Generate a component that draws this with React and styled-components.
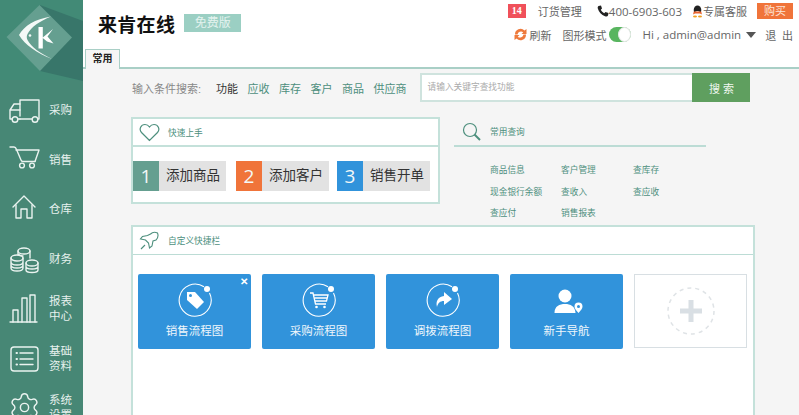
import styled, { createGlobalStyle } from "styled-components";
import { Settings } from "lucide-react";

const GlobalStyle = createGlobalStyle`
  html, body {
    margin: 0;
    padding: 0;
    height: 100%;
    overflow: hidden;
  }
  body {
    font-family: "Liberation Sans", "Noto Sans CJK SC", sans-serif;
  }
  * {
    box-sizing: border-box;
  }
`;

const Page = styled.div`
  display: flex;
  width: 799px;
  height: 415px;
  overflow: hidden;
  background: #f5f5f5;
`;

const Sidebar = styled.aside`
  width: 83px;
  flex: none;
  background: #478775;
  overflow: hidden;
`;

const LogoBox = styled.div`
  height: 86px;
  svg {
    display: block;
  }
`;

const NavItem = styled.div`
  height: 49.6px;
  display: flex;
  align-items: center;
  padding-left: 8px;
  flex: none;
`;

const NavIcon = styled.div`
  width: 34px;
  height: 34px;
  margin-right: 7px;
  flex: none;
  svg {
    display: block;
  }
`;

const NavLabel = styled.div`
  width: 24px;
  font-size: 11.5px;
  line-height: 15px;
  color: #e6f1ee;
`;

const Main = styled.main`
  flex: 1;
  min-width: 0;
  display: flex;
  flex-direction: column;
`;

const Header = styled.header`
  height: 49px;
  background: #fff;
  display: flex;
  justify-content: space-between;
  flex: none;
`;

const Brand = styled.div`
  display: flex;
  align-items: center;
  height: 46px;
  padding-left: 15px;
  gap: 9px;
`;

const BrandName = styled.h1`
  margin: 0;
  font-size: 19px;
  font-weight: 700;
  color: #111;
  letter-spacing: 0.3px;
`;

const Edition = styled.span`
  width: 57px;
  height: 18px;
  background: #9bcfc3;
  color: #e4f3ef;
  font-size: 12px;
  line-height: 18px;
  text-align: center;
`;

const HeaderRight = styled.div`
  display: flex;
  flex-direction: column;
  align-items: flex-end;
  padding: 3px 6px 0 0;
`;

const HeaderRow = styled.div`
  display: flex;
  align-items: center;
  height: ${(p) => p.$h}px;
  margin-bottom: ${(p) => p.$mb || 0}px;
  color: #666;
  white-space: nowrap;
`;

const CountBadge = styled.span`
  width: 18px;
  height: 14px;
  background: #f0505a;
  color: #fff;
  font-family: "Liberation Serif", serif;
  font-size: 10px;
  font-weight: 700;
  line-height: 14px;
  text-align: center;
  margin-right: 12px;
`;

const HeaderText = styled.span`
  margin-left: ${(p) => p.$ml || 0}px;
  font-family: "Open Sans", "Noto Sans CJK SC", sans-serif;
  font-size: ${(p) => p.$size || 11}px;
  word-spacing: ${(p) => p.$ws || 0}px;
`;

const BuyButton = styled.span`
  width: 36px;
  height: 16px;
  margin-left: 10px;
  background: #f0743a;
  color: #fde3d6;
  font-size: 11px;
  line-height: 16px;
  text-align: center;
`;

const Toggle = styled.span`
  width: 22px;
  height: 15px;
  margin-left: 3px;
  border-radius: 8px;
  background: #58b55f;
  display: flex;
  justify-content: flex-end;
  align-items: center;
`;

const ToggleKnob = styled.span`
  width: 13px;
  height: 15px;
  border-radius: 50%;
  background: #fff;
  border: 1px solid #e4e8e6;
`;

const TabStrip = styled.div`
  height: 20px;
  flex: none;
  background: #fff;
  border-bottom: 2px solid #a9cfc6;
  padding-left: 2px;
`;

const Tab = styled.div`
  width: 35px;
  height: 20px;
  background: #f5f5f5;
  border: 1px solid #a9cfc6;
  border-bottom: none;
  font-size: 10px;
  font-weight: 700;
  color: #222;
  line-height: 18px;
  text-align: center;
`;

const Content = styled.div`
  flex: 1;
  min-height: 0;
  padding: 4px 0 0 48px;
  display: flex;
  flex-direction: column;
`;

const SearchRow = styled.div`
  display: flex;
  align-items: center;
  height: 29px;
  width: 619px;
  flex: none;
`;

const SearchLabel = styled.span`
  width: 85px;
  padding-left: 1px;
  font-size: 11px;
  color: #888;
  white-space: nowrap;
`;

const FilterLink = styled.span`
  width: ${(p) => p.$w || 31.5}px;
  font-size: 11px;
  color: ${(p) => (p.$active ? "#333" : "#4d8f7d")};
`;

const SearchInput = styled.div`
  margin-left: 13px;
  flex: 1;
  height: 29px;
  background: #fff;
  border: 2px solid #cfe3de;
  border-right: none;
  padding-left: 6px;
  font-size: 8.7px;
  line-height: 25px;
  color: #aaa;
`;

const SearchButton = styled.button`
  width: 58px;
  height: 29px;
  border: none;
  padding: 0 0 0 4px;
  background: #5f9f5f;
  color: #f0f7f0;
  font-family: inherit;
  font-size: 11px;
  letter-spacing: 3px;
`;

const TopPanels = styled.div`
  display: flex;
  margin-top: 15px;
  height: 108px;
  flex: none;
`;

const QuickPanel = styled.section`
  width: 309px;
  height: 87px;
  background: #fff;
  border: 2px solid #c4e1da;
`;

const PanelHead = styled.div`
  display: flex;
  align-items: center;
  height: ${(p) => p.$h || 28}px;
  padding-left: ${(p) => p.$pl || 6}px;
  gap: 8px;
  border-bottom: ${(p) => p.$line || 2}px solid ${(p) => p.$color || "#c4e1da"};
  font-size: 8.7px;
  color: #4d8f7d;
  svg {
    flex: none;
  }
`;

const Steps = styled.div`
  display: flex;
  padding-top: 14px;
`;

const Step = styled.div`
  display: flex;
  width: 93px;
  height: 30px;
  margin-right: ${(p) => p.$mr || 0}px;
  background: #e2e2e2;
`;

const StepNum = styled.span`
  width: 26px;
  flex: none;
  background: ${(p) => p.$color};
  color: #f4f8f7;
  font-family: "Open Sans", sans-serif;
  font-size: 19px;
  line-height: 30px;
  text-align: center;
`;

const StepText = styled.span`
  flex: 1;
  padding-left: 7px;
  font-size: 13.5px;
  line-height: 30px;
  color: #333;
  white-space: nowrap;
`;

const QueryPanel = styled.section`
  width: 252px;
  margin-left: 14px;
`;

const QueryGrid = styled.div`
  display: grid;
  grid-template-columns: 71px 72px 60px;
  grid-auto-rows: 21.5px;
  padding: 13px 0 0 36px;
  font-size: 8.7px;
  line-height: 21.5px;
  color: #4d8f7d;
  white-space: nowrap;
`;

const CustomPanel = styled.section`
  width: 624px;
  flex: 1;
  background: #fff;
  border: 2px solid #c4e1da;
  border-bottom: none;
`;

const Tiles = styled.div`
  display: flex;
  gap: 11px;
  padding: 19px 0 0 5px;
`;

const Tile = styled.div`
  position: relative;
  width: 113px;
  height: 75px;
  background: #3193db;
  border-radius: 2px;
  color: #f0f7fc;
  font-size: 11.5px;
  display: flex;
  flex-direction: column;
  align-items: center;
  padding-top: 8px;
  svg {
    display: block;
  }
`;

const TileLabel = styled.span`
  margin-top: 5px;
  line-height: 16px;
`;

const CloseMark = styled.span`
  position: absolute;
  top: 2px;
  right: 3px;
  font-size: 10px;
  line-height: 12px;
  font-weight: 700;
  color: #fff;
`;

const AddTile = styled.div`
  width: 113px;
  height: 74px;
  border: 1.5px solid #d8dfe3;
  display: flex;
  align-items: center;
  justify-content: center;
  background: #fff;
`;

const line = {
  fill: "none",
  stroke: "#eaf3f0",
  strokeWidth: 1.4,
  strokeLinecap: "round",
  strokeLinejoin: "round",
};

const navIcons = {
  truck: (
    <svg width="34" height="34" viewBox="0 0 34 34" {...line}>
      <path d="M12 22V6h19v19h-1M24 25H12" />
      <path d="M12 10H6l-4 6v9h2M2 16h10M10 25h2" />
      <circle cx="7" cy="25.500" r="2.800" />
      <circle cx="27" cy="25.500" r="2.800" />
    </svg>
  ),
  cart: (
    <svg width="34" height="34" viewBox="0 0 34 34" {...line}>
      <path d="M2 4h4c1.500 0 2 1 2.500 2.500L13 17c.3 1 1 1.500 2 1.500h12" />
      <path d="M8 7h23l-4 11.500" />
      <circle cx="14" cy="22.500" r="2.400" />
      <circle cx="24" cy="22.500" r="2.400" />
    </svg>
  ),
  house: (
    <svg width="34" height="34" viewBox="0 0 34 34" {...line}>
      <path d="M5 14 16 3l11 11" />
      <path d="M8 12v13h5V16h6v9h5V12" />
    </svg>
  ),
  coins: (
    <svg width="34" height="34" viewBox="0 0 34 34" {...line}>
      <ellipse cx="16" cy="8" rx="6" ry="3" />
      <path d="M10 8v4M22 8v7M10 11c1 1.500 3 2 5 2" />
      <ellipse cx="9" cy="15" rx="6" ry="3" />
      <path d="M3 15v10c0 2 3 3 6 3s6-1 6-3V15M3 19c0 2 3 3 6 3s6-1 6-3M3 22c0 2 3 3 6 3s6-1 6-3" />
      <ellipse cx="24" cy="20" rx="6" ry="3" />
      <path d="M18 20v7c0 1.500 3 2.500 6 2.500s6-1 6-2.500v-7M18 23.500c0 1.500 3 2.500 6 2.500s6-1 6-2.500" />
    </svg>
  ),
  bars: (
    <svg width="34" height="34" viewBox="0 0 34 34" {...line}>
      <path d="M2 30h27" />
      <path d="M5 30V18h5v12M14 30V6h5v24M22 30V3h5v27" />
    </svg>
  ),
  list: (
    <svg width="34" height="34" viewBox="0 0 34 34" {...line}>
      <rect x="3" y="5" width="27" height="24" rx="3" />
      <path d="M12 11h13M12 17h13M12 22.500h13" />
      <path d="M8.500 11h.5M8.500 17h.5M8.500 22.500h.5" strokeWidth="2" />
    </svg>
  ),
  gear: <Settings size={33} color="#eaf3f0" strokeWidth={1.05} />,
};

const navItems = [
  { icon: "truck", label: "采购" },
  { icon: "cart", label: "销售" },
  { icon: "house", label: "仓库" },
  { icon: "coins", label: "财务" },
  { icon: "bars", label: "报表中心" },
  { icon: "list", label: "基础资料" },
  { icon: "gear", label: "系统设置" },
];

const queryLinks = [
  "商品信息",
  "客户管理",
  "查库存",
  "现金银行余额",
  "查收入",
  "查应收",
  "查应付",
  "销售报表",
];

function Logo() {
  return (
    <svg width="83" height="86" viewBox="0 0 83 86">
      <rect width="83" height="86" fill="#428a76" />
      <path d="M0 80h83v6H0z" fill="#478775" />
      <path d="M40 5 83 21v60L40 71z" fill="#38766a" />
      <path d="M39.500 5 72 37.500 40 71 6.500 37z" fill="#659f90" />
      <path
        d="M51 16.500C35 19 24 26 19 35c6 10 18 18 33 24C40 53 31 47 27.500 40c-1-2-1-4 0-6C31 27 40 21 51 16.500z"
        fill="#f4f9f7"
      />
      <circle cx="30" cy="35.500" r="1.300" fill="#f4f9f7" />
      <path
        d="M38.500 27h4.300v10.500L53 29l-5.500 7.500 6 7-6.500-2-4.200-3.500V48.500h-4.300z"
        fill="#fff"
      />
    </svg>
  );
}

function TileBadge({ children }) {
  return (
    <svg width="36" height="36" viewBox="0 0 36 36">
      <path
        d="M27 4.800A16 16 0 1 0 32.500 11"
        fill="none"
        stroke="#fff"
        strokeWidth="1.100"
      />
      <circle cx="30" cy="7" r="3" fill="#fff" />
      {children}
    </svg>
  );
}

export default function App() {
  return (
    <Page>
      <GlobalStyle />
      <Sidebar>
        <LogoBox>
          <Logo />
        </LogoBox>
        {navItems.map((item) => (
          <NavItem key={item.label}>
            <NavIcon>{navIcons[item.icon]}</NavIcon>
            <NavLabel>{item.label}</NavLabel>
          </NavItem>
        ))}
      </Sidebar>

      <Main>
        <Header>
          <Brand>
            <BrandName>来肯在线</BrandName>
            <Edition>免费版</Edition>
          </Brand>
          <HeaderRight>
            <HeaderRow $h={16} $mb={7}>
              <CountBadge>14</CountBadge>
              <HeaderText>订货管理</HeaderText>
              <svg width="12" height="12" viewBox="0 0 12 12" style={{ marginLeft: 15 }}>
                <path
                  d="M1.500 1 4 .5 5 3.500 3.800 4.800c.6 1.500 2 2.800 3.400 3.400L8.500 7 11.500 8l-.5 2.500C10.500 11.500 9.500 11.800 8 11.300 4.500 10 1.800 7 .8 3.500.5 2.500.8 1.500 1.500 1z"
                  fill="#222"
                />
              </svg>
              <HeaderText $size={11.5}>400-6903-603</HeaderText>
              <svg width="11" height="13" viewBox="0 0 11 13" style={{ marginLeft: 10 }}>
                <ellipse cx="5.500" cy="5" rx="3.800" ry="4.500" fill="#222" />
                <ellipse cx="5.500" cy="8.300" rx="2.600" ry="2.400" fill="#fff" />
                <path d="M1.800 6.500h7.400l.8 3-2-1H3l-2 1z" fill="#e9622b" />
                <ellipse cx="3" cy="11.500" rx="2" ry="1" fill="#f0a020" />
                <ellipse cx="8" cy="11.500" rx="2" ry="1" fill="#f0a020" />
              </svg>
              <HeaderText>专属客服</HeaderText>
              <BuyButton>购买</BuyButton>
            </HeaderRow>
            <HeaderRow $h={17}>
              <svg width="15" height="15" viewBox="0 0 15 15">
                <path
                  d="M2 7.500A5.500 5.500 0 0 1 11.500 3.500L13.500 2v5H8.500l1.700-1.700A3.500 3.500 0 0 0 4.500 7.500z"
                  fill="#ee7a3c"
                />
                <path
                  d="M13 7.500A5.500 5.500 0 0 1 3.500 11.500L1.500 13V8h5L4.800 9.700a3.500 3.500 0 0 0 5.700-2.200z"
                  fill="#ee7a3c"
                />
              </svg>
              <HeaderText $ml={1}>刷新</HeaderText>
              <HeaderText $ml={11}>图形模式</HeaderText>
              <Toggle>
                <ToggleKnob />
              </Toggle>
              <HeaderText $ml={11} $size={11.5}>
                Hi , admin@admin
              </HeaderText>
              <svg width="10" height="6" viewBox="0 0 10 6" style={{ marginLeft: 5 }}>
                <path d="M0 0h10L5 6z" fill="#555" />
              </svg>
              <HeaderText $ml={9} $ws={3}>
                退 出
              </HeaderText>
            </HeaderRow>
          </HeaderRight>
        </Header>

        <TabStrip>
          <Tab>常用</Tab>
        </TabStrip>

        <Content>
          <SearchRow>
            <SearchLabel>输入条件搜索:</SearchLabel>
            <FilterLink $active>功能</FilterLink>
            <FilterLink>应收</FilterLink>
            <FilterLink>库存</FilterLink>
            <FilterLink>客户</FilterLink>
            <FilterLink>商品</FilterLink>
            <FilterLink $w={33}>供应商</FilterLink>
            <SearchInput>请输入关键字查找功能</SearchInput>
            <SearchButton>搜索</SearchButton>
          </SearchRow>

          <TopPanels>
            <QuickPanel>
              <PanelHead>
                <svg width="21" height="19" viewBox="0 0 21 19">
                  <path
                    d="M10.500 17.500 2.500 9.500C-.5 6 2 1.500 6 1.500c2 0 3.500 1 4.500 2.500 1-1.500 2.500-2.500 4.500-2.500 4 0 6.500 4.500 3.500 8z"
                    fill="none"
                    stroke="#4d8f7d"
                    strokeWidth="1.200"
                  />
                </svg>
                <span>快速上手</span>
              </PanelHead>
              <Steps>
                <Step $mr={10}>
                  <StepNum $color="#659f90">1</StepNum>
                  <StepText>添加商品</StepText>
                </Step>
                <Step $mr={8}>
                  <StepNum $color="#f0743a">2</StepNum>
                  <StepText>添加客户</StepText>
                </Step>
                <Step>
                  <StepNum $color="#3193db">3</StepNum>
                  <StepText>销售开单</StepText>
                </Step>
              </Steps>
            </QuickPanel>

            <QueryPanel>
              <PanelHead $h={30} $pl={8} $color="#bcdcd5">
                <svg width="19" height="19" viewBox="0 0 19 19" style={{ marginRight: 1 }}>
                  <circle cx="8" cy="8" r="6.500" fill="none" stroke="#4d8f7d" strokeWidth="1.200" />
                  <path d="M12.500 12.500 18 18" stroke="#4d8f7d" strokeWidth="2" />
                </svg>
                <span>常用查询</span>
              </PanelHead>
              <QueryGrid>
                {queryLinks.map((text) => (
                  <span key={text}>{text}</span>
                ))}
              </QueryGrid>
            </QueryPanel>
          </TopPanels>

          <CustomPanel>
            <PanelHead $h={28} $line={1} $color="#bcdcd5">
              <svg width="21" height="20" viewBox="0 0 21 20">
                <path
                  d="M11.500 3c2-2 5-2 7-1 .8 2 .5 5-1.500 7l-3 1-1 5-2.500 2-1-5-3-3-5-1 2-2.500 5-1z M6 14l-4 4"
                  fill="none"
                  stroke="#4d8f7d"
                  strokeWidth="1.100"
                />
              </svg>
              <span>自定义快捷栏</span>
            </PanelHead>
            <Tiles>
              <Tile>
                <CloseMark>✕</CloseMark>
                <TileBadge>
                  <path d="M10 10h8l9 10-7 7-10-9z" fill="#fff" />
                  <circle cx="13.500" cy="13.500" r="1.500" fill="#3193db" />
                </TileBadge>
                <TileLabel>销售流程图</TileLabel>
              </Tile>
              <Tile>
                <TileBadge>
                  <path
                    d="M9 11h3l2.500 11H25M13 13h14l-1.500 6H14.200M13.800 16h12.500"
                    fill="none"
                    stroke="#fff"
                    strokeWidth="1.300"
                  />
                  <circle cx="15.500" cy="25" r="1.300" fill="#fff" />
                  <circle cx="23.500" cy="25" r="1.300" fill="#fff" />
                </TileBadge>
                <TileLabel>采购流程图</TileLabel>
              </Tile>
              <Tile>
                <TileBadge>
                  <path
                    d="M19 10l8 7-8 6v-4c-4 0-6 2-7 6-1.500-6 1-10 7-11z"
                    fill="#fff"
                  />
                </TileBadge>
                <TileLabel>调拨流程图</TileLabel>
              </Tile>
              <Tile>
                <svg width="36" height="36" viewBox="0 0 36 36">
                  <circle cx="16" cy="14" r="6.500" fill="#fff" />
                  <path d="M5.500 31c0-7 5-9 10.500-9s10 2 10.500 9z" fill="#fff" />
                  <path
                    d="M29.500 31c-2.500-3-4-4.500-4-6.500a4 4 0 0 1 8 0c0 2-1.500 3.500-4 6.500z"
                    fill="#fff"
                  />
                  <circle cx="29.500" cy="24.500" r="1.500" fill="#3193db" />
                </svg>
                <TileLabel>新手导航</TileLabel>
              </Tile>
              <AddTile>
                <svg width="48" height="48" viewBox="0 0 48 48">
                  <circle
                    cx="24"
                    cy="24"
                    r="23"
                    fill="none"
                    stroke="#dfe3e6"
                    strokeWidth="1.500"
                    strokeDasharray="4 4"
                  />
                  <path d="M24 13v22M13 24h22" stroke="#d9dfe4" strokeWidth="5" />
                </svg>
              </AddTile>
            </Tiles>
          </CustomPanel>
        </Content>
      </Main>
    </Page>
  );
}
